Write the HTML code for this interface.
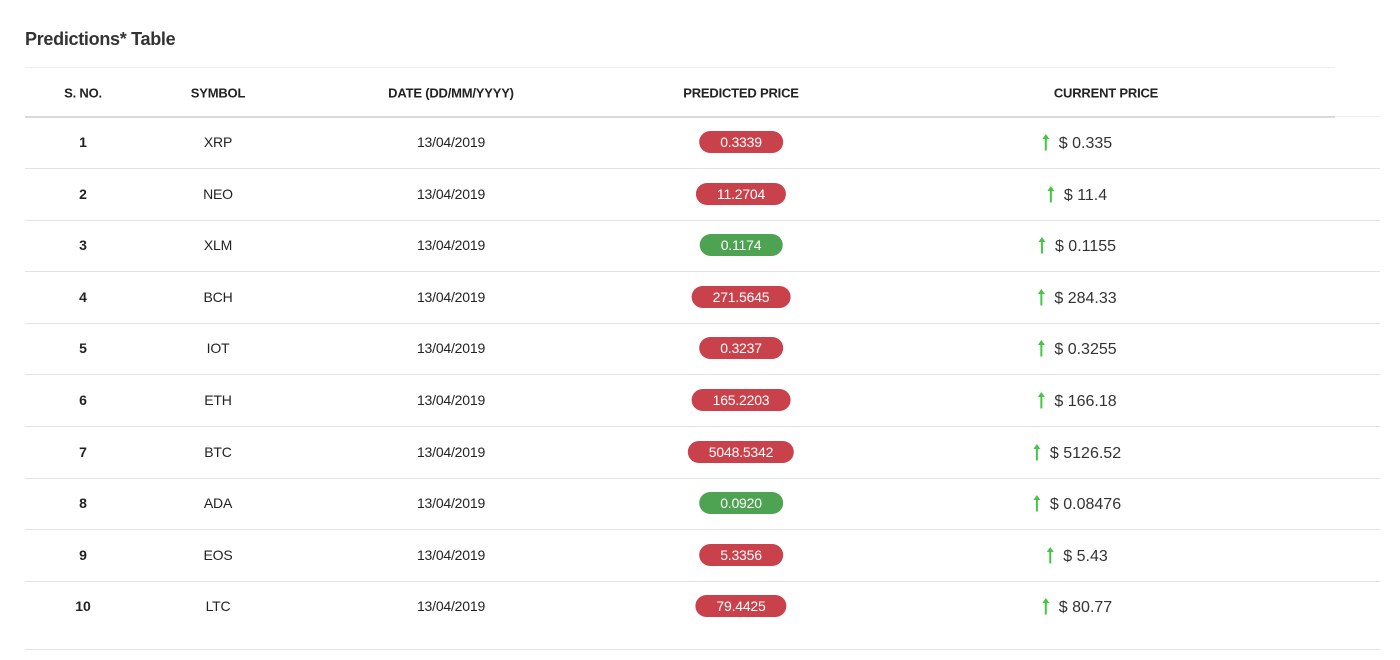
<!DOCTYPE html>
<html><head><meta charset="utf-8"><style>
body{margin:0;width:1400px;height:660px;background:#fff;font-family:"Liberation Sans",sans-serif;position:relative;overflow:hidden;color:#222}
.t{position:absolute;left:25px;top:29px;font-size:18px;font-weight:bold;color:#333;letter-spacing:-0.3px}
.l{position:absolute;left:25px;height:1px;background:#e3e3e3}
.c{position:absolute;transform:translate(-50%,-50%);white-space:nowrap}
.h{font-size:13px;font-weight:bold;color:#222;letter-spacing:-0.2px}
.n{font-size:14px;font-weight:bold}
.s{font-size:14px;letter-spacing:-0.2px}
.b{font-size:14px;color:#fff;height:22px;line-height:22px;padding:0 21px;border-radius:11px;background:#c9414a;letter-spacing:-0.2px}
.g{background:#4ea352}
.p{font-size:16px;color:#333}
.p svg{margin-right:9px;vertical-align:-3px}
</style></head><body>
<div class="t">Predictions* Table</div>
<div class="l" style="top:67px;width:1310px;background:#eee"></div>
<div class="l" style="top:116px;width:1310px;height:2px;background:#d7dbde"></div>
<div class="l" style="top:116px;left:1335px;width:45px;background:#eee"></div>
<div class="c h" style="left:83px;top:93px">S. NO.</div>
<div class="c h" style="left:218px;top:93px">SYMBOL</div>
<div class="c h" style="left:451px;top:93px">DATE (DD/MM/YYYY)</div>
<div class="c h" style="left:741px;top:93px">PREDICTED PRICE</div>
<div class="c h" style="left:1106px;top:93px">CURRENT PRICE</div>
<div id="rows"></div>
<script>
var d=[["XRP","0.3339",0,"0.335"],["NEO","11.2704",0,"11.4"],["XLM","0.1174",1,"0.1155"],["BCH","271.5645",0,"284.33"],["IOT","0.3237",0,"0.3255"],["ETH","165.2203",0,"166.18"],["BTC","5048.5342",0,"5126.52"],["ADA","0.0920",1,"0.08476"],["EOS","5.3356",0,"5.43"],["LTC","79.4425",0,"80.77"]];
var h="";
var arr='<svg width="8" height="18" viewBox="0 0 8 18"><path d="M4 17.5V2.5" stroke="#45c645" stroke-width="2" fill="none"/><path d="M0.5 6L4 1 7.5 6Z" fill="#45c645"/></svg>';
for(var i=0;i<10;i++){var y=142+i*51.6;var r=d[i];
h+='<div class="c n" style="left:83px;top:'+y+'px">'+(i+1)+'</div>';
h+='<div class="c s" style="left:218px;top:'+y+'px">'+r[0]+'</div>';
h+='<div class="c s" style="left:451px;top:'+y+'px">13/04/2019</div>';
h+='<div class="c b'+(r[2]?' g':'')+'" style="left:741px;top:'+y+'px">'+r[1]+'</div>';
h+='<div class="c p" style="left:1077px;top:'+(y+1)+'px">'+arr+'$ '+r[3]+'</div>';
var ly=(i<9)?Math.round(168+i*51.6):649;
h+='<div class="l" style="top:'+ly+'px;width:1355px"></div>';}
document.getElementById("rows").innerHTML=h;
</script>
</body></html>
